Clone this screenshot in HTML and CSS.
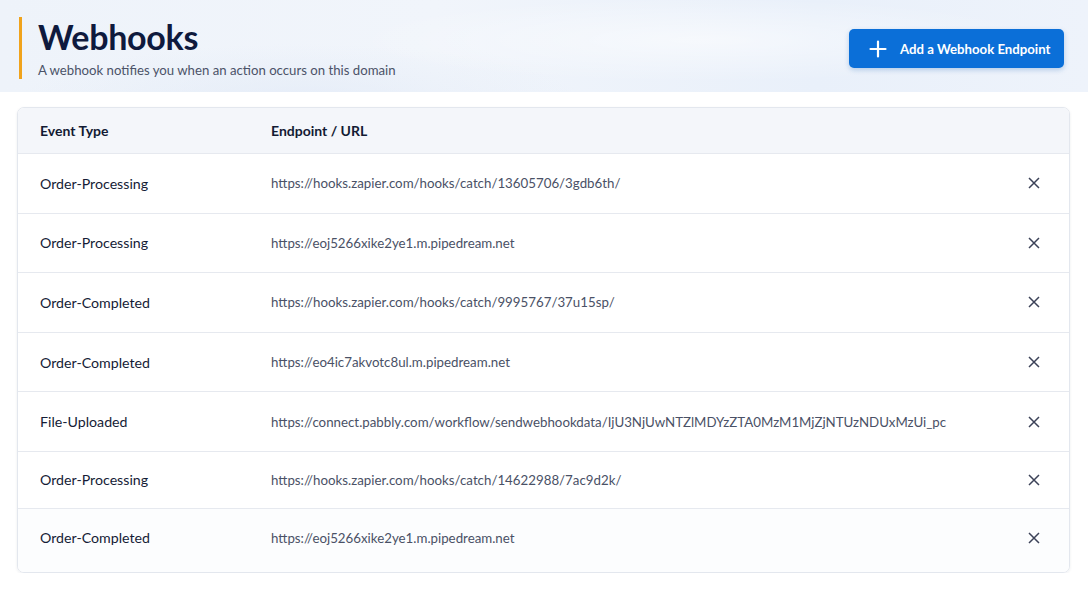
FILE: index.html
```html
<!DOCTYPE html>
<html>
<head>
<meta charset="utf-8">
<link rel="stylesheet" href="styles.css">
</head>
<body>
<header class="hero">
  <div class="title-block">
    <h1 class="title">Webhooks</h1>
    <p class="subtitle">A webhook notifies you when an action occurs on this domain</p>
  </div>
  <button class="add-btn">
    <svg class="plus" width="18" height="18" viewBox="0 0 18 18"><path d="M9 1.5v15M1.5 9h15" stroke="#fff" stroke-width="2.2" stroke-linecap="round"/></svg>
    <span>Add a Webhook Endpoint</span>
  </button>
</header>
<main class="card">
  <div class="row head">
    <div class="c1">Event Type</div>
    <div class="c2">Endpoint / URL</div>
    <div class="c3"></div>
  </div>
  <div class="row"><div class="c1">Order-Processing</div><div class="c2">https://hooks.zapier.com/hooks/catch/13605706/3gdb6th/</div><div class="c3"><svg class="x" viewBox="0 0 12 12"><path d="M1 1l10 10M11 1L1 11"/></svg></div></div>
  <div class="row"><div class="c1">Order-Processing</div><div class="c2">https://eoj5266xike2ye1.m.pipedream.net</div><div class="c3"><svg class="x" viewBox="0 0 12 12"><path d="M1 1l10 10M11 1L1 11"/></svg></div></div>
  <div class="row"><div class="c1">Order-Completed</div><div class="c2">https://hooks.zapier.com/hooks/catch/9995767/37u15sp/</div><div class="c3"><svg class="x" viewBox="0 0 12 12"><path d="M1 1l10 10M11 1L1 11"/></svg></div></div>
  <div class="row"><div class="c1">Order-Completed</div><div class="c2">https://eo4ic7akvotc8ul.m.pipedream.net</div><div class="c3"><svg class="x" viewBox="0 0 12 12"><path d="M1 1l10 10M11 1L1 11"/></svg></div></div>
  <div class="row"><div class="c1">File-Uploaded</div><div class="c2">https://connect.pabbly.com/workflow/sendwebhookdata/IjU3NjUwNTZlMDYzZTA0MzM1MjZjNTUzNDUxMzUi_pc</div><div class="c3"><svg class="x" viewBox="0 0 12 12"><path d="M1 1l10 10M11 1L1 11"/></svg></div></div>
  <div class="row short"><div class="c1">Order-Processing</div><div class="c2">https://hooks.zapier.com/hooks/catch/14622988/7ac9d2k/</div><div class="c3"><svg class="x" viewBox="0 0 12 12"><path d="M1 1l10 10M11 1L1 11"/></svg></div></div>
  <div class="row last"><div class="c1">Order-Completed</div><div class="c2">https://eoj5266xike2ye1.m.pipedream.net</div><div class="c3"><svg class="x" viewBox="0 0 12 12"><path d="M1 1l10 10M11 1L1 11"/></svg></div></div>
</main>
</body>
</html>
```
FILE: styles.css
```css
* { box-sizing: border-box; }
body {
  margin: 0;
  background: #ffffff;
  font-family: Lato, "Open Sans", sans-serif;
  color: #1a2035;
}
.hero {
  height: 92px;
  display: flex;
  align-items: flex-start;
  justify-content: space-between;
  padding: 17px 24px 0 19px;
  background:
    radial-gradient(ellipse 500px 60px at 700px 40px, rgba(255,255,255,0.55), rgba(255,255,255,0) 70%),
    radial-gradient(ellipse 400px 80px at 300px 100px, rgba(220,230,245,0.5), rgba(255,255,255,0) 70%),
    linear-gradient(90deg, #eef3fa 0%, #f1f5fb 40%, #e9f0fa 75%, #eef3fb 100%);
}
.title-block {
  border-left: 3px solid #f0a31c;
  padding-left: 16px;
  height: 62px;
}
.title {
  margin: 0;
  font-size: 34px;
  font-weight: 700;
  line-height: 40px;
  color: #0f1a3d;
  letter-spacing: -0.3px;
}
.subtitle {
  margin: 4px 0 0;
  font-size: 13.2px;
  line-height: 18px;
  color: #4b5368;
}
.add-btn {
  margin-top: 12px;
  width: 215px;
  height: 39px;
  border: none;
  border-radius: 5px;
  background: #0b6fd8;
  color: #fff;
  font-family: Lato, sans-serif;
  font-size: 13.2px;
  font-weight: 700;
  display: flex;
  align-items: center;
  padding: 0 0 0 20px;
  gap: 13px;
  box-shadow: 0 2px 5px rgba(11, 90, 180, 0.25);
}
.plus { flex: none; }
.card {
  margin: 15px 18px 0 17px;
  border: 1px solid #e3e7ee;
  border-radius: 7px;
  overflow: hidden;
  box-shadow: 0 1px 3px rgba(30, 40, 70, 0.08);
}
.row {
  display: grid;
  grid-template-columns: 253px 1fr 60px;
  align-items: center;
  height: 59.6px;
  border-bottom: 1px solid #e6e9ef;
  background: #fff;
}
.row.short { height: 57px; }
.row.last { height: 63px; padding-bottom: 5px; border-bottom: none; background: #fcfdfe; }
.row.head {
  height: 46px;
  background: #f4f6fa;
}
.c1 {
  padding-left: 22px;
  font-size: 14.2px;
  color: #151c36;
}
.head .c1, .head .c2 { font-size: 14px; font-weight: 700; color: #121a33; }
.c2 {
  font-size: 13.3px;
  color: #4a5166;
  white-space: nowrap;
}
.c3 { display: flex; justify-content: flex-start; padding-left: 19px; }
.x {
  width: 12px;
  height: 12px;
  stroke: #3c4258;
  stroke-width: 1.5;
  fill: none;
}
```
